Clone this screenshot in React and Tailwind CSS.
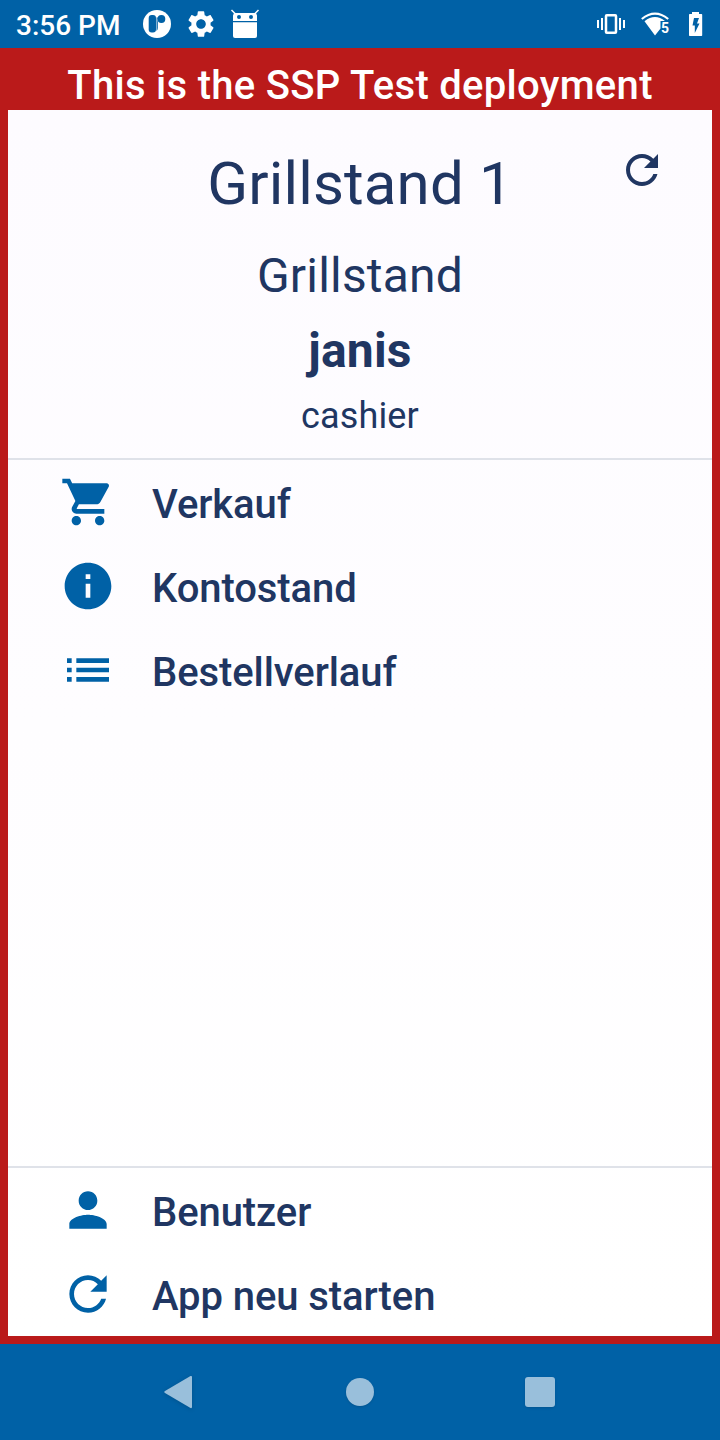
const PATHS = {
  cart:
    "M7 18c-1.1 0-1.99.9-1.99 2S5.9 22 7 22s2-.9 2-2-.9-2-2-2zM1 2v2h2l3.6 7.59-1.35 2.45c-.16.28-.25.61-.25.96 0 1.1.9 2 2 2h12v-2H7.42c-.14 0-.25-.11-.25-.25l.03-.12.9-1.63h7.45c.75 0 1.41-.41 1.75-1.03l3.58-6.49c.08-.14.12-.31.12-.48 0-.55-.45-1-1-1H5.21l-.94-2H1zm16 16c-1.1 0-1.99.9-1.99 2s.89 2 1.99 2 2-.9 2-2-.9-2-2-2z",
  info:
    "M12 2C6.48 2 2 6.48 2 12s4.48 10 10 10 10-4.48 10-10S17.52 2 12 2zm1 15h-2v-6h2v6zm0-8h-2V7h2v2z",
  list: "M3 13h2v-2H3v2zm0 4h2v-2H3v2zm0-8h2V7H3v2zm4 4h14v-2H7v2zm0 4h14v-2H7v2zM7 7v2h14V7H7z",
  user:
    "M12 12c2.21 0 4-1.79 4-4s-1.79-4-4-4-4 1.79-4 4 1.79 4 4 4zm0 2c-2.67 0-8 1.34-8 4v2h16v-2c0-2.66-5.33-4-8-4z",
  refresh:
    "M17.65 6.35C16.2 4.9 14.21 4 12 4c-4.42 0-7.99 3.58-7.99 8s3.57 8 7.99 8c3.73 0 6.84-2.55 7.73-6h-2.08c-.82 2.33-3.04 4-5.65 4-3.31 0-6-2.69-6-6s2.69-6 6-6c1.66 0 3.14.69 4.22 1.78L13 11h7V4l-2.35 2.35z",
  gear:
    "M19.14 12.94c.04-.3.06-.61.06-.94 0-.32-.02-.64-.07-.94l2.03-1.58c.18-.14.23-.41.12-.61l-1.92-3.32c-.12-.22-.37-.29-.59-.22l-2.39.96c-.5-.38-1.03-.7-1.62-.94l-.36-2.54c-.04-.24-.24-.41-.48-.41h-3.84c-.24 0-.43.17-.47.41l-.36 2.54c-.59.24-1.13.57-1.62.94l-2.39-.96c-.22-.08-.47 0-.59.22L2.74 8.87c-.12.21-.08.47.12.61l2.03 1.58c-.05.3-.09.63-.09.94s.02.64.07.94l-2.03 1.58c-.18.14-.23.41-.12.61l1.92 3.32c.12.22.37.29.59.22l2.39-.96c.5.38 1.03.7 1.62.94l.36 2.54c.05.24.24.41.48.41h3.84c.24 0 .44-.17.47-.41l.36-2.54c.59-.24 1.13-.56 1.62-.94l2.39.96c.22.08.47 0 .59-.22l1.92-3.32c.12-.22.07-.47-.12-.61l-2.01-1.58zM12 15.6c-1.98 0-3.6-1.62-3.6-3.6s1.62-3.6 3.6-3.6 3.6 1.62 3.6 3.6-1.62 3.6-3.6 3.6z",
};

function Icon({ name, className }) {
  return (
    <svg viewBox="0 0 24 24" fill="currentColor" className={className}>
      <path d={PATHS[name]} />
    </svg>
  );
}

function StatusBar() {
  return (
    <header className="flex h-12 shrink-0 items-center bg-[#0061a6] pl-4 text-white">
      <span className="w-[125px] pt-[3px] text-[28px] leading-8 font-medium whitespace-nowrap">3:56 PM</span>
      <svg viewBox="0 0 32 32" className="size-8">
        <circle cx="16" cy="16" r="14" fill="white" />
        <rect x="7.7" y="7" width="7.3" height="17.5" rx="3" fill="#0061a6" />
        <path d="M16 9q-.5 0-.5 2v12q1.300-1 1.300-3v-6q-.8-2 0-4z" fill="#0061a6" />
        <circle cx="20.4" cy="11" r="3.9" fill="#0061a6" />
      </svg>
      <Icon name="gear" className="ml-3 size-8" />
      <svg viewBox="0 0 32 32" className="ml-3 size-8" fill="white">
        <path d="M2.5 2l4 4M29.5 2l-4 4" stroke="white" strokeWidth="1.5" />
        <path
          fillRule="evenodd"
          d="M4 13V7.500L5 5h22l1 2.500V13zM10 7a2 2 0 1 0 0 4a2 2 0 0 0 0-4zm12 0a2 2 0 1 0 0 4a2 2 0 0 0 0-4z"
        />
        <path d="M4 14.3h24V28q0 2-2 2H6q-2 0-2-2z" />
      </svg>
      <svg viewBox="0 0 32 32" className="ml-auto size-8" fill="white">
        <path d="M2 12h2v8H2zM6 10h2v12H6zM24 10h2v12h-2zM28 12h2v8h-2z" />
        <rect x="11" y="7.250" width="10" height="17.500" rx=".8" fill="none" stroke="white" strokeWidth="2.500" />
      </svg>
      <svg viewBox="0 0 32 32" className="ml-3 size-8" fill="white">
        <path d="M2.800 11Q16 .300 29.200 11" fill="none" stroke="white" strokeWidth="2.200" />
        <path d="M5.500 13.200Q16 5 26 13h-4.500v7.500L16 27.500z" />
        <text x="22" y="25" fontSize="14" fontWeight="700">5</text>
      </svg>
      <svg viewBox="0 0 32 32" className="mr-2 ml-[9px] size-8" fill="white">
        <path
          fillRule="evenodd"
          d="M12 4h7v2h2.500q.700 0 .700.700V27.300q0 .700-.700.700H9.700q-.700 0-.700-.700V6.700Q9 6 9.700 6H12zM14 10l-1.500 7.500h2.300V25l4.700-9.500h-2.500l2-5.500z"
        />
      </svg>
    </header>
  );
}

function MenuItem({ icon, label }) {
  return (
    <button className="flex h-[84px] w-full items-center pl-[52px] text-left">
      <Icon name={icon} className="size-14 text-[#0061a6]" />
      <span className="ml-9 pt-1.5 text-[40px] leading-[48px] font-medium tracking-[-0.08px]">{label}</span>
    </button>
  );
}

function NavBar() {
  return (
    <nav className="grid h-24 shrink-0 grid-cols-[88px_180px_184px_176px_92px] place-items-center bg-[#0061a6] text-[#99bfdb]">
      <span />
      <svg viewBox="0 0 32 36" className="h-9 w-8 drop-shadow-sm" fill="currentColor">
        <path d="M28.500 2q1.500-.5 1.500 1v30q0 1.500-1.500 1L3 19q-1.500-1 0-2z" />
      </svg>
      <span className="size-7 rounded-full bg-[#99bfdb] shadow-sm" />
      <span className="size-[30px] rounded-[3px] bg-[#99bfdb] shadow-sm" />
      <span />
    </nav>
  );
}

export default function App() {
  return (
    <div className="flex h-[1440px] w-[720px] flex-col overflow-hidden font-['Roboto',sans-serif] text-[#203662]">
      <StatusBar />
      <div className="flex min-h-0 flex-1 flex-col bg-[#ba1a1a] px-2 pb-2">
        <div className="h-[62px] shrink-0 pt-[14px] text-center text-[40px] leading-[48px] font-medium tracking-[0.3px] whitespace-nowrap text-white">
          This is the SSP Test deployment
        </div>
        <main className="flex min-h-0 flex-1 flex-col bg-linear-to-b from-[#fdfbff] to-white">
          <section className="relative flex h-[350px] shrink-0 flex-col items-center border-b-2 border-[#dfe2e9] pt-[38px]">
            <h1 className="text-[60px] leading-[72px] tracking-[0.15px]">Grillstand 1</h1>
            <p className="mt-[26px] text-[48px] leading-[60px] tracking-[0.2px]">Grillstand</p>
            <p className="mt-[15px] text-[48px] leading-[60px] font-bold tracking-[0.2px]">janis</p>
            <p className="mt-[13px] text-[36px] leading-[44px] tracking-[0.15px]">cashier</p>
            <button className="absolute top-9 right-[46px]">
              <Icon name="refresh" className="size-12" />
            </button>
          </section>
          <div className="flex-1">
            <MenuItem icon="cart" label="Verkauf" />
            <MenuItem icon="info" label="Kontostand" />
            <MenuItem icon="list" label="Bestellverlauf" />
          </div>
          <div className="border-t-2 border-[#dfe2e9]">
            <MenuItem icon="user" label="Benutzer" />
            <MenuItem icon="refresh" label="App neu starten" />
          </div>
        </main>
      </div>
      <NavBar />
    </div>
  );
}
